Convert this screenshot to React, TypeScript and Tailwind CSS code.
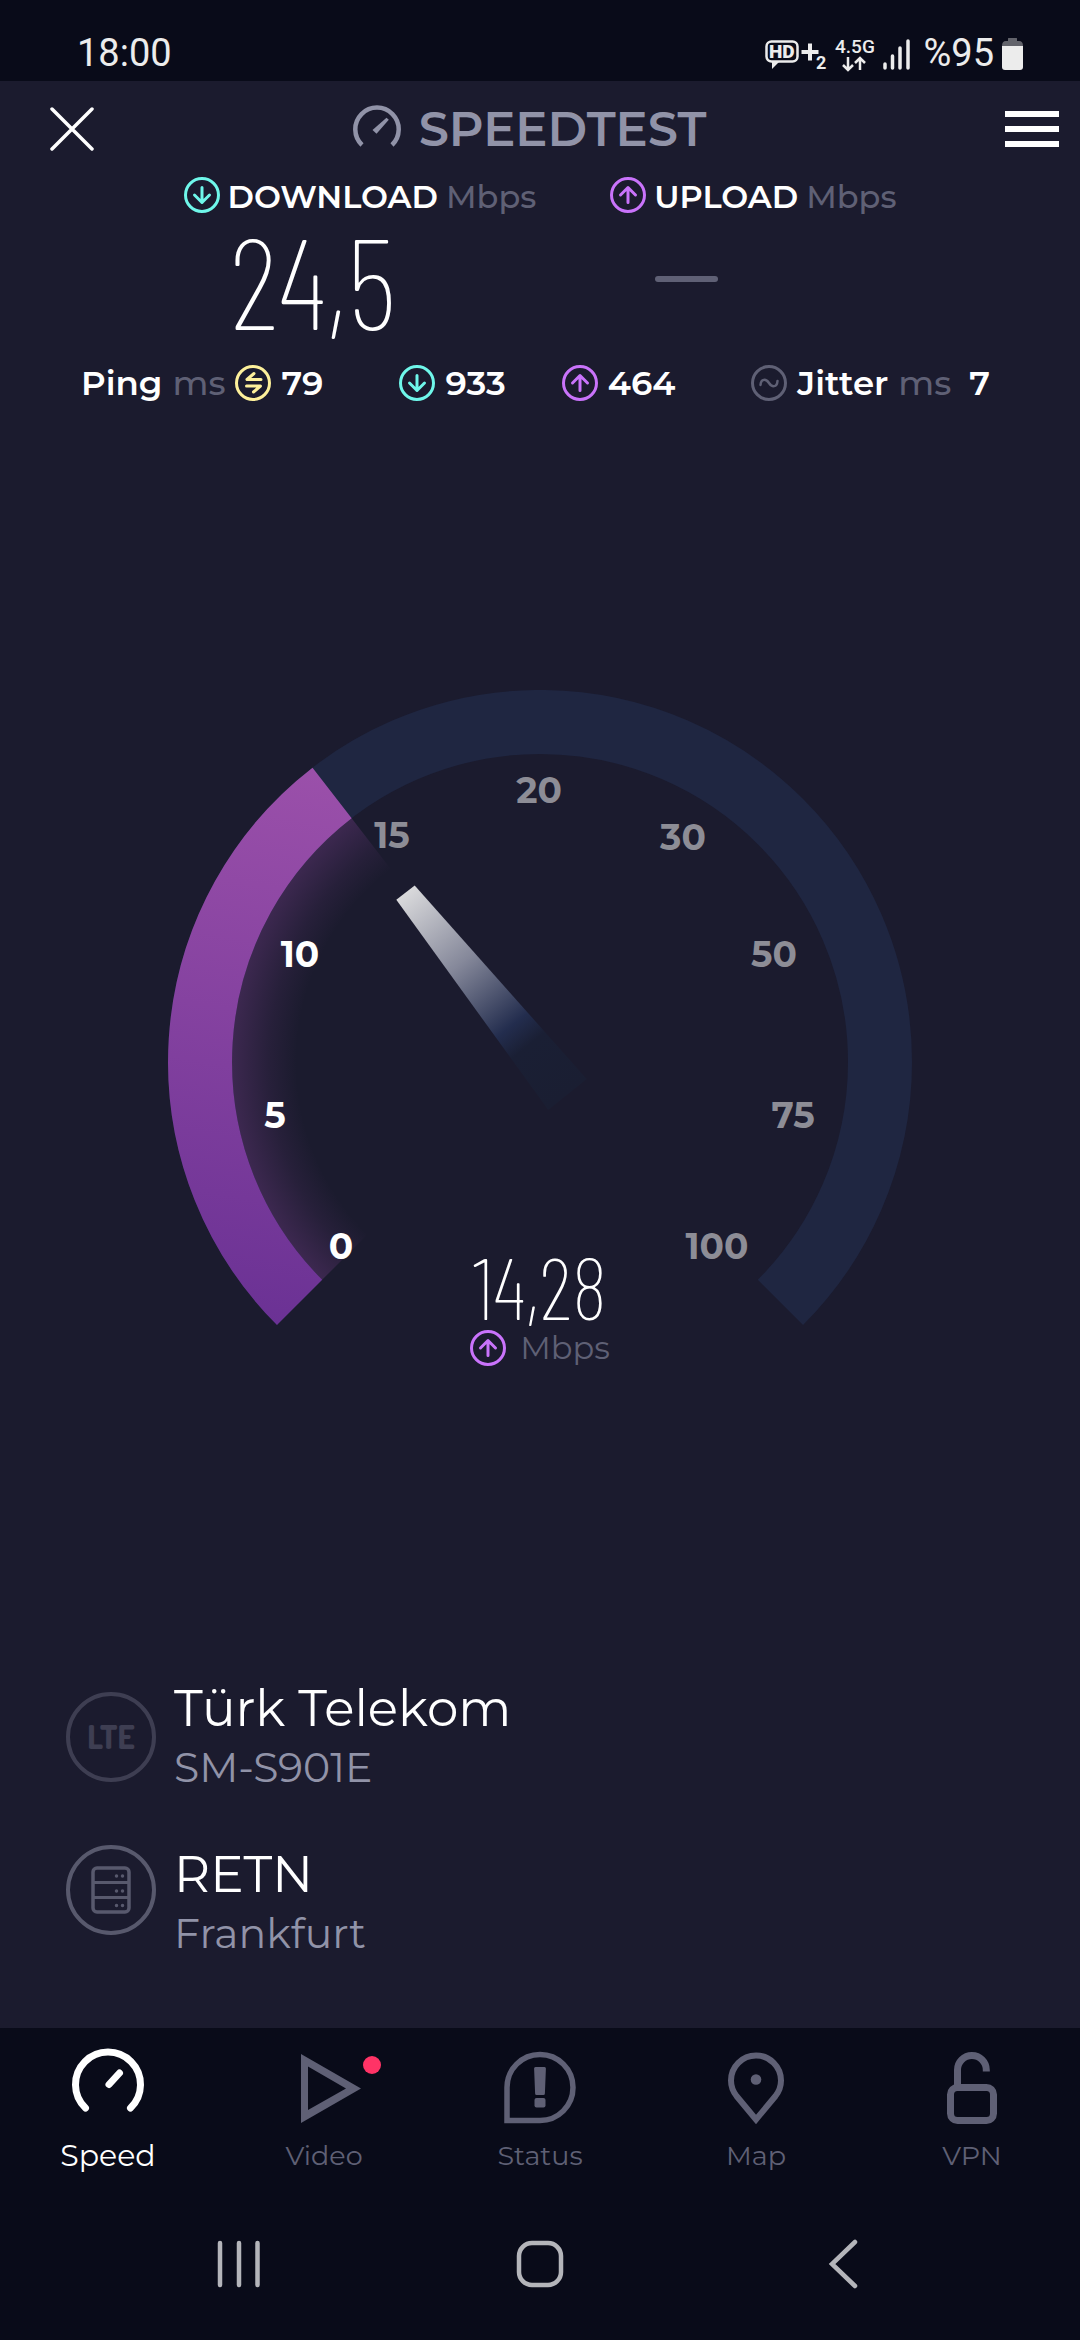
import { ReactNode } from "react";

type IconProps = {
    className?: string;
};

function CircleIcon({ className, children }: { className: string; children: ReactNode }) {
    return (
        <svg
            viewBox="0 0 36 36"
            className={`h-9 w-9 shrink-0 ${className}`}
            fill="none"
            stroke="currentColor"
            strokeWidth="3"
            strokeLinecap="round"
            strokeLinejoin="round"
        >
            <circle cx="18" cy="18" r="16.5" />
            {children}
        </svg>
    );
}

function DownIcon() {
    return (
        <CircleIcon className="text-[#6ff7ea]">
            <path d="M18 10.5v15M10.5 18l7.5 7.5 7.5-7.5" />
        </CircleIcon>
    );
}

function UpIcon() {
    return (
        <CircleIcon className="text-[#c973fb]">
            <path d="M18 25.5v-15M10.5 18l7.5-7.5 7.5 7.5" />
        </CircleIcon>
    );
}

function PingIcon() {
    return (
        <CircleIcon className="text-[#fdf09b]">
            <path d="M19 8.5l-7 6h14M11.5 21h14l-7 6" />
        </CircleIcon>
    );
}

function JitterIcon() {
    return (
        <CircleIcon className="text-[#5f6075]">
            <path strokeWidth="2.5" d="M9.5 20c.5-6.5 5.5-6.5 8.5-2s8 4.5 8.5-2" />
        </CircleIcon>
    );
}

function StatusBar() {
    return (
        <div className="flex h-[81px] items-center justify-between bg-[#090b19] pt-[26px] pl-[77px] pr-[57px] font-['Roboto',sans-serif] text-[38px] text-[#ececec]">
            <span>18:00</span>
            <div className="flex items-center">
                <svg viewBox="0 0 146 34" className="h-[34px] w-[146px] overflow-visible" fill="currentColor">
                    <rect x="1.5" y="4.5" width="31" height="20" rx="5" fill="none" stroke="currentColor" strokeWidth="2.5" />
                    <path d="M7 24h8l-8 8z" />
                    <text x="4" y="21" fontSize="19" fontWeight="900">HD</text>
                    <path d="M43 6.5h4V13h6.5v4H47v6.5h-4V17h-6.5v-4H43z" />
                    <text x="51" y="32" fontSize="18" fontWeight="700">2</text>
                    <text x="70" y="16" fontSize="19" fontWeight="500">4.5G</text>
                    <path
                        d="M83 20v12M78 28l5 5 5-5M95 33V21M90 26l5-5 5 5"
                        fill="none"
                        stroke="currentColor"
                        strokeWidth="2.5"
                    />
                    <path
                        d="M120 27v4M127.5 19v12M135 11v20M143 4v27"
                        stroke="currentColor"
                        strokeWidth="3.5"
                        strokeLinecap="round"
                    />
                </svg>
                <span className="ml-3">%95</span>
                <svg viewBox="0 0 21 34" className="ml-2 h-[34px] w-[21px]">
                    <path d="M6 1.5q0-.5.5-.5h8q.5 0 .5.5V4h2q4 0 4 5H0q0-5 4-5h2z" fill="#62636b" />
                    <path d="M0 9h21v21q0 3-3 3H3q-3 0-3-3z" fill="#ececec" />
                </svg>
            </div>
        </div>
    );
}

function Header() {
    return (
        <header className="flex h-24 items-center pl-[50px] pr-[21px]">
            <button aria-label="Close">
                <svg viewBox="0 0 44 44" className="h-11 w-11" stroke="#fff" strokeWidth="3.5" strokeLinecap="round">
                    <path d="M2 2l40 40M42 2L2 42" />
                </svg>
            </button>
            <h1 className="mr-10 flex flex-1 items-center justify-center gap-[18px] text-5xl font-semibold text-[#9193a8]">
                <svg viewBox="0 0 48 48" className="h-12 w-12">
                    <path d="M9 40A21.7 21.7 0 1 1 39 40" fill="none" stroke="currentColor" strokeWidth="4.5" />
                    <path d="M19.5 25l4 3.7 12.3-14-2.3-2z" fill="currentColor" />
                </svg>
                SPEEDTEST
            </h1>
            <button aria-label="Menu" className="flex w-[54px] flex-col gap-[9px]">
                <span className="h-1.5 bg-white" />
                <span className="h-1.5 bg-white" />
                <span className="h-1.5 bg-white" />
            </button>
        </header>
    );
}

function Results() {
    return (
        <section className="flex justify-center gap-[74px] text-[32px] font-semibold">
            <div>
                <div className="flex h-9 items-center">
                    <DownIcon />
                    <span className="ml-2 mt-1">DOWNLOAD</span>
                    <span className="ml-2 mt-1 font-medium text-[#5f6075]">Mbps</span>
                </div>
                <p className="ml-[46px] font-['Barlow_Condensed','Roboto_Condensed',sans-serif] text-[128px] leading-[132px] font-extralight">
                    24,5
                </p>
            </div>
            <div>
                <div className="flex h-9 items-center">
                    <UpIcon />
                    <span className="ml-2 mt-1">UPLOAD</span>
                    <span className="ml-2 mt-1 font-medium text-[#5f6075]">Mbps</span>
                </div>
                <div className="mt-[63px] ml-[45px] h-1.5 w-[63px] rounded-full bg-[#5f6075]" />
            </div>
        </section>
    );
}

function Latency() {
    return (
        <section className="mt-5 flex h-9 items-center justify-between pl-[81px] pr-[90px] text-[34px] font-semibold">
            <div className="flex items-center gap-[10px]">
                <span>Ping</span>
                <span className="font-medium text-[#5f6075]">ms</span>
                <PingIcon />
                <span>79</span>
            </div>
            <div className="flex gap-14">
                <div className="flex items-center gap-[10px]">
                    <DownIcon />
                    <span>933</span>
                </div>
                <div className="flex items-center gap-[10px]">
                    <UpIcon />
                    <span>464</span>
                </div>
            </div>
            <div className="flex items-center gap-[10px]">
                <JitterIcon />
                <span>Jitter</span>
                <span className="font-medium text-[#5f6075]">ms</span>
                <span className="ml-2">7</span>
            </div>
        </section>
    );
}

const ticks = [
    { label: "0", x: 173, y: 569, passed: true },
    { label: "5", x: 107, y: 438, passed: true },
    { label: "10", x: 132, y: 277, passed: true },
    { label: "15", x: 224, y: 158, passed: false },
    { label: "20", x: 371, y: 113, passed: false },
    { label: "30", x: 515, y: 160, passed: false },
    { label: "50", x: 606, y: 277, passed: false },
    { label: "75", x: 625, y: 438, passed: false },
    { label: "100", x: 549, y: 569, passed: false },
];

function Gauge() {
    return (
        <div className="grid w-[744px] max-w-full">
            <svg viewBox="0 0 744 676" className="col-start-1 row-start-1 w-full">
                <defs>
                    <linearGradient id="fill" gradientUnits="userSpaceOnUse" x1="60" y1="634" x2="160" y2="78">
                        <stop offset="0" stopColor="#6a3194" />
                        <stop offset="1" stopColor="#9b50aa" />
                    </linearGradient>
                    <radialGradient id="glow" gradientUnits="userSpaceOnUse" cx="372" cy="372" r="308">
                        <stop offset=".79" stopColor="#a04fb4" stopOpacity="0" />
                        <stop offset=".88" stopColor="#a04fb4" stopOpacity=".09" />
                        <stop offset="1" stopColor="#a04fb4" stopOpacity=".25" />
                    </radialGradient>
                    <linearGradient id="needle" gradientUnits="userSpaceOnUse" x1="237" y1="202" x2="399" y2="404">
                        <stop offset="0" stopColor="#dadadc" />
                        <stop offset=".35" stopColor="#85889a" />
                        <stop offset=".66" stopColor="#232d4e" />
                        <stop offset=".76" stopColor="#1a1f34" />
                        <stop offset="1" stopColor="#1a1e32" />
                    </linearGradient>
                </defs>
                <path d="M131.6 612.4A340 340 0 1 1 612.4 612.4" fill="none" stroke="#1f2641" strokeWidth="64" />
                <path d="M176.8 567.2A276 276 0 0 1 203.2 153.6" fill="none" stroke="url(#glow)" strokeWidth="64" />
                <path d="M131.6 612.4A340 340 0 0 1 164.1 103" fill="none" stroke="url(#fill)" strokeWidth="64" />
                <path d="M228.3 209.8L246.7 195.5 418.7 389 380.3 420z" fill="url(#needle)" />
                {ticks.map((tick) => (
                    <text
                        key={tick.label}
                        x={tick.x}
                        y={tick.y}
                        textAnchor="middle"
                        fontSize="36"
                        fontWeight="700"
                        fill={tick.passed ? "#fff" : "#8d8d96"}
                    >
                        {tick.label}
                    </text>
                ))}
            </svg>
            <div className="col-start-1 row-start-1 flex flex-col items-center self-end">
                <p className="font-['Barlow_Condensed','Roboto_Condensed',sans-serif] text-[86px] leading-[88px] font-extralight">
                    14,28
                </p>
                <div className="flex h-9 items-center gap-[14px] text-[32px] text-[#5f6075]">
                    <UpIcon />
                    Mbps
                </div>
            </div>
        </div>
    );
}

function Providers() {
    return (
        <section className="flex flex-col gap-[50px] px-[66px] pb-[67px]">
            <div className="flex items-center gap-[18px]">
                <div className="flex h-[90px] w-[90px] items-center justify-center rounded-full border-4 border-[#3e3e52] font-['Dosis','Roboto_Condensed',sans-serif] text-[32px] font-extrabold text-[#3e3e52]">
                    LTE
                </div>
                <div>
                    <p className="text-[50px] leading-[60px]">Türk Telekom</p>
                    <p className="text-[41px] leading-[56px] text-[#9193a8]">SM-S901E</p>
                </div>
            </div>
            <div className="flex items-start gap-[18px]">
                <svg viewBox="0 0 90 90" className="h-[90px] w-[90px]" fill="none" stroke="#58596d">
                    <circle cx="45" cy="45" r="43" strokeWidth="4" />
                    <rect x="27" y="23" width="36" height="44" rx="4" strokeWidth="3.5" />
                    <path d="M27 37.5h36M27 52.5h36" strokeWidth="3" />
                    <path
                        d="M50.5 31h.01M56.5 31h.01M50.5 46h.01M56.5 46h.01M50.5 60.5h.01M56.5 60.5h.01"
                        strokeWidth="3.5"
                        strokeLinecap="round"
                    />
                </svg>
                <div>
                    <p className="text-[50px] leading-[60px]">RETN</p>
                    <p className="text-[41px] leading-[56px] text-[#9193a8]">Frankfurt</p>
                </div>
            </div>
        </section>
    );
}

const iconClass = "h-20 w-20 overflow-visible";

function SpeedIcon({ className }: IconProps) {
    return (
        <svg viewBox="0 0 80 80" className={className} fill="none" stroke="currentColor" strokeWidth="7" strokeLinecap="round">
            <path d="M17.5 60A32.5 32.5 0 1 1 62.5 60M41 36.5L51.5 25" />
        </svg>
    );
}

function VideoIcon({ className }: IconProps) {
    return (
        <svg viewBox="0 0 80 80" className={className} fill="currentColor" fillRule="evenodd">
            <path d="M17 6l60 34.5L17 75zM24 18.5V62l38-21.5z" />
            <circle cx="88" cy="17" r="9" fill="#ff3366" />
        </svg>
    );
}

function StatusIcon({ className }: IconProps) {
    return (
        <svg viewBox="0 0 80 80" className={className} fill="currentColor">
            <path d="M7 72.5V39.5A33 33 0 1 1 40 72.5z" fill="none" stroke="currentColor" strokeWidth="5.5" />
            <path d="M35.5 19h9q1.5 0 1.4 1.5l-1 25q-.1 1.5-1.4 1.5h-7q-1.3 0-1.4-1.5l-1-25Q34 19 35.5 19z" />
            <rect x="34.5" y="50" width="11" height="9.5" rx="2" />
        </svg>
    );
}

function MapIcon({ className }: IconProps) {
    return (
        <svg viewBox="0 0 80 80" className={className} fill="none" stroke="currentColor" strokeWidth="6">
            <path d="M40 71.5L20.5 48C17 43.5 15 38.5 15 32.5a25 25 0 0 1 50 0c0 6-2 11-5.5 15.5z" />
            <circle cx="40" cy="31.5" r="5.3" fill="currentColor" stroke="none" />
        </svg>
    );
}

function VpnIcon({ className }: IconProps) {
    return (
        <svg viewBox="0 0 80 80" className={className} fill="none" stroke="currentColor" strokeWidth="7">
            <rect x="18.5" y="39.5" width="43" height="33" rx="7" />
            <path d="M25.5 38V22a14.4 14.4 0 0 1 28.8 0v1.5" />
        </svg>
    );
}

const tabs = [
    { label: "Speed", Icon: SpeedIcon, active: true },
    { label: "Video", Icon: VideoIcon, active: false },
    { label: "Status", Icon: StatusIcon, active: false },
    { label: "Map", Icon: MapIcon, active: false },
    { label: "VPN", Icon: VpnIcon, active: false },
];

function TabBar() {
    return (
        <nav className="grid grid-cols-5 pt-5">
            {tabs.map(({ label, Icon, active }) => (
                <button
                    key={label}
                    className={
                        active
                            ? "flex flex-col items-center text-[30px] leading-[56px] text-white"
                            : "flex flex-col items-center text-[27px] leading-[56px] text-[#5f6075]"
                    }
                >
                    <Icon className={iconClass} />
                    {label}
                </button>
            ))}
        </nav>
    );
}

function SystemNav() {
    return (
        <div className="grid h-[156px] grid-cols-3 place-items-center px-[88px] pt-1 text-[#b4b5ba]">
            <button aria-label="Recent apps">
                <svg viewBox="0 0 50 50" className="h-[50px] w-[50px]" stroke="currentColor" strokeWidth="4.5" strokeLinecap="round">
                    <path d="M6 4v42M25 4v42M43.5 4v42" />
                </svg>
            </button>
            <button aria-label="Home">
                <svg viewBox="0 0 50 50" className="h-[50px] w-[50px]" fill="none" stroke="currentColor" strokeWidth="4.5">
                    <rect x="4" y="4" width="42" height="42" rx="13" />
                </svg>
            </button>
            <button aria-label="Back">
                <svg viewBox="0 0 50 50" className="h-[50px] w-[50px]" fill="none" stroke="currentColor" strokeWidth="4.5" strokeLinecap="round">
                    <path d="M39 3L16 25l23 22" />
                </svg>
            </button>
        </div>
    );
}

export default function App() {
    return (
        <div className="flex min-h-screen flex-col bg-[#1b1b2e] font-['Montserrat','Inter',sans-serif] text-white">
            <StatusBar />
            <Header />
            <Results />
            <Latency />
            <main className="flex flex-1 items-center justify-center pb-6">
                <Gauge />
            </main>
            <Providers />
            <footer className="bg-[#090b19]">
                <TabBar />
                <SystemNav />
            </footer>
        </div>
    );
}
